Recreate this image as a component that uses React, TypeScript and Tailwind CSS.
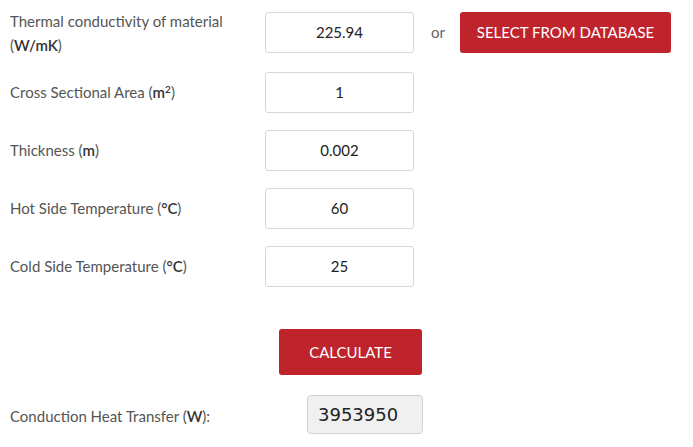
const fields = [
	{label: <>Cross Sectional Area (<b className="font-semibold text-[#333]">m<sup className="text-[10px]">2</sup></b>)</>, value: "1"},
	{label: <>Thickness (<b className="font-semibold text-[#333]">m</b>)</>, value: "0.002"},
	{label: <>Hot Side Temperature (<b className="font-semibold text-[#333]">°C</b>)</>, value: "60"},
	{label: <>Cold Side Temperature (<b className="font-semibold text-[#333]">°C</b>)</>, value: "25"},
];

export default function App() {
	return (
		<div className="w-[693px] h-[447px] bg-white text-[#555] text-[15px] font-['Lato','Open_Sans',sans-serif]">
			<div className="flex flex-col pt-[11px] pl-[10px]">
				<div className="flex items-center h-[43px] mb-[17px]">
					<div className="w-[255px] leading-[24px]">
						Thermal conductivity of material<br />(<b className="font-semibold text-[#333]">W/mK</b>)
					</div>
					<div className="w-[149px] h-[41px] border border-[#d4d8de] rounded-[3px] flex items-center justify-center text-[#222]">
						225.94
					</div>
					<span className="ml-[17px] w-[29px] text-[#666]">or</span>
					<button className="w-[211px] h-[41px] rounded-[3px] bg-[#bf232c] text-white text-[15px]">
						SELECT FROM DATABASE
					</button>
				</div>
				{fields.map((f, i) => (
					<div key={i} className="flex items-center h-[42px] mb-[16px]">
						<div className="w-[255px] leading-[24px]">{f.label}</div>
						<div className="w-[149px] h-[41px] border border-[#d4d8de] rounded-[3px] flex items-center justify-center text-[#222]">
							{f.value}
						</div>
					</div>
				))}
			</div>
			<div className="flex pl-[279px] pt-[26px]">
				<button className="w-[143px] h-[46px] rounded-[3px] bg-[#bf232c] text-white text-[15px]">CALCULATE</button>
			</div>
			<div className="flex items-center pl-[10px] pt-[20px]">
				<span className="w-[297px] pt-[3px]">Conduction Heat Transfer (<b className="font-semibold text-[#333]">W</b>):</span>
				<div className="w-[116px] h-[39px] bg-[#f0f0f0] border border-[#cdd2d8] rounded-[4px] flex items-center pl-[10px] text-[18px] text-[#222] font-['DejaVu_Sans',sans-serif]">
					3953950
				</div>
			</div>
		</div>
	);
}
